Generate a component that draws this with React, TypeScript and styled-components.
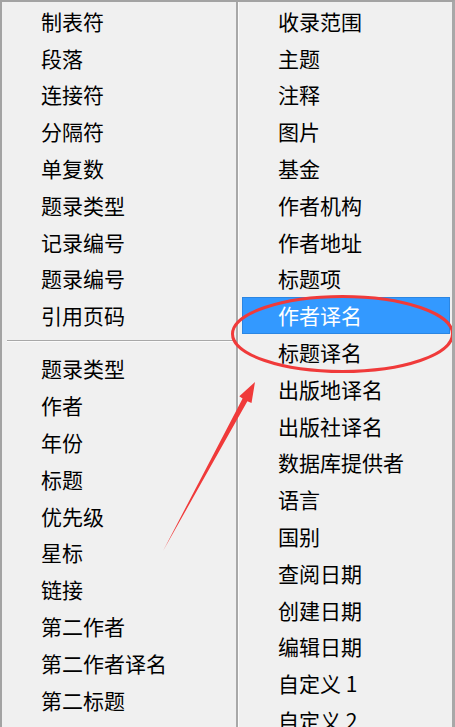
import React from 'react';
import styled, { createGlobalStyle } from 'styled-components';

const GlobalStyle = createGlobalStyle`
  html,
  body {
    margin: 0;
    padding: 0;
    background: #f0f0f0;
  }

  body {
    font-family: 'Noto Sans CJK SC', 'Noto Sans', sans-serif;
  }
`;

const MenuBlock = styled.div`
  position: relative;
  display: flex;
  width: 455px;
  height: 727px;
  box-sizing: border-box;
  overflow: hidden;
  background: #f0f0f0;
  border-top: 2px solid #a3a3a3;
  border-left: 2px solid #a3a3a3;
  border-right: 3px solid #a8a8a8;
`;

const MenuColumn = styled.div<{ width: number }>`
  width: ${(props) => props.width}px;
  padding-top: 1px;
  flex-shrink: 0;
`;

const ColumnDivider = styled.div`
  width: 2px;
  flex-shrink: 0;
  background: #a8a8a8;
  border-right: 1px solid #fbfbfb;
`;

const MenuItem = styled.div<{ active?: boolean }>`
  display: flex;
  align-items: center;
  height: 36.8px;
  box-sizing: border-box;
  margin: 0 2px 0 3px;
  padding: 0 0 1px 35px;
  font-size: 21px;
  white-space: nowrap;
  color: ${(props) => (props.active ? '#ffffff' : '#000000')};
  background: ${(props) => (props.active ? '#3399ff' : 'transparent')};
  border: 1px solid ${(props) => (props.active ? '#2b86e3' : 'transparent')};
`;

const MenuSeparator = styled.div`
  height: 16.4px;
  display: flex;
  align-items: flex-start;
  padding-left: 5px;

  &::after {
    content: '';
    flex: 1;
    margin-top: 6px;
    height: 1px;
    background: #a8a8a8;
    border-bottom: 1px solid #fbfbfb;
  }
`;

const Annotation = styled.svg`
  position: absolute;
  left: -2px;
  top: -2px;
  pointer-events: none;
`;

const topItems = [
  '制表符',
  '段落',
  '连接符',
  '分隔符',
  '单复数',
  '题录类型',
  '记录编号',
  '题录编号',
  '引用页码',
];

const bottomItems = [
  '题录类型',
  '作者',
  '年份',
  '标题',
  '优先级',
  '星标',
  '链接',
  '第二作者',
  '第二作者译名',
  '第二标题',
  '第二标题译名',
];

const rightItems = [
  '收录范围',
  '主题',
  '注释',
  '图片',
  '基金',
  '作者机构',
  '作者地址',
  '标题项',
  '作者译名',
  '标题译名',
  '出版地译名',
  '出版社译名',
  '数据库提供者',
  '语言',
  '国别',
  '查阅日期',
  '创建日期',
  '编辑日期',
  '自定义 1',
  '自定义 2',
];

const App = () => {
  return (
    <>
      <GlobalStyle />
      <MenuBlock>
        <MenuColumn width={234}>
          {topItems.map((item) => (
            <MenuItem key={`t-${item}`}>{item}</MenuItem>
          ))}
          <MenuSeparator />
          {bottomItems.map((item) => (
            <MenuItem key={`b-${item}`}>{item}</MenuItem>
          ))}
        </MenuColumn>
        <ColumnDivider />
        <MenuColumn width={213}>
          {rightItems.map((item) => (
            <MenuItem key={item} active={item === '作者译名'}>
              {item}
            </MenuItem>
          ))}
        </MenuColumn>
        <Annotation width={455} height={727} viewBox="0 0 455 727">
          <ellipse
            cx={342.5}
            cy={334}
            rx={110}
            ry={37.5}
            fill="none"
            stroke="#f03a3a"
            strokeWidth={3}
          />
          <polygon
            points="163,551 242.6,398.6 239.3,396.3 255,382 251.5,403 247.4,401.2"
            fill="#f03a3a"
          />
        </Annotation>
      </MenuBlock>
    </>
  );
};

export default App;
